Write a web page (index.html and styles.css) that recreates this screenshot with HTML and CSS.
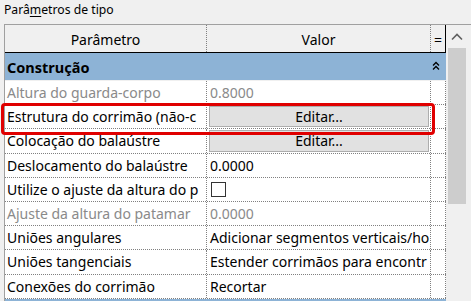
FILE: index.html
```html
<!DOCTYPE html>
<html>
<head>
<meta charset="utf-8">
<link rel="stylesheet" href="styles.css">
</head>
<body>
<div class="title">Par&acirc;<u>m</u>etros de tipo</div>
<div class="frame">
  <div class="table">
    <div class="head">
      <div class="hc c1">Parâmetro</div>
      <div class="hc c2">Valor</div>
      <div class="hc c3">=</div>
    </div>
    <div class="section">
      <span class="sec-label">Construção</span>
      <svg class="collapse" width="8" height="10" viewBox="0 0 8 10"><path d="M1 4.5 L4 1.5 L7 4.5 M1 8.5 L4 5.5 L7 8.5" fill="none" stroke="#000" stroke-width="1.3"/></svg>
    </div>
    <div class="row dim"><div class="c1 cell">Altura do guarda-corpo</div><div class="c2 cell">0.8000</div><div class="c3"></div></div>
    <div class="row"><div class="c1 cell">Estrutura do corrimão (não-c</div><div class="c2 btncell"><div class="btn">Editar...</div></div><div class="c3"></div></div>
    <div class="row"><div class="c1 cell">Colocação do balaústre</div><div class="c2 btncell"><div class="btn">Editar...</div></div><div class="c3"></div></div>
    <div class="row"><div class="c1 cell">Deslocamento do balaústre</div><div class="c2 cell">0.0000</div><div class="c3"></div></div>
    <div class="row"><div class="c1 cell">Utilize o ajuste da altura do p</div><div class="c2 cell"><span class="check"></span></div><div class="c3"></div></div>
    <div class="row dim"><div class="c1 cell">Ajuste da altura do patamar</div><div class="c2 cell">0.0000</div><div class="c3"></div></div>
    <div class="row"><div class="c1 cell">Uniões angulares</div><div class="c2 cell">Adicionar segmentos verticais/ho</div><div class="c3"></div></div>
    <div class="row"><div class="c1 cell">Uniões tangenciais</div><div class="c2 cell">Estender corrimãos para encontr</div><div class="c3"></div></div>
    <div class="row"><div class="c1 cell">Conexões do corrimão</div><div class="c2 cell">Recortar</div><div class="c3"></div></div>
    <div class="section next"></div>
    <div class="highlight"></div>
  </div>
  <div class="scroll">
    <div class="arrow"><svg width="12" height="8" viewBox="0 0 12 8"><path d="M1 6.5 L6 1.5 L11 6.5" fill="none" stroke="#606060" stroke-width="1.6"/></svg></div>
    <div class="thumb"></div>
  </div>
</div>
</body>
</html>
```
FILE: styles.css
```css
html, body {
  margin: 0;
  padding: 0;
  background: #f0f0f0;
  overflow: hidden;
  width: 471px;
  height: 301px;
}
body {
  font-family: "Noto Sans", sans-serif;
  color: #000;
}
.title {
  height: 24px;
  box-sizing: border-box;
  padding: 1px 0 0 4px;
  font-size: 12.2px;
  line-height: 17px;
}
.title u {
  text-decoration-thickness: 1px;
  text-underline-offset: 2px;
}
.frame {
  display: flex;
  margin-left: 4px;
  border-top: 1px solid #a0a0a0;
}
.table {
  position: relative;
  width: 442px;
  border-left: 1px solid #a0a0a0;
  box-sizing: border-box;
  font-size: 14px;
}
.head {
  display: flex;
  height: 28px;
  border-bottom: 1px solid #000;
  box-sizing: border-box;
}
.hc {
  display: flex;
  align-items: center;
  justify-content: center;
  box-sizing: border-box;
  border-right: 1px solid #000;
  padding-top: 1px;
}
.hc.c1 { width: 202px; }
.hc.c3 { width: 15px; border-right: 1px solid #000; }
.section {
  height: 28px;
  background: #8db3d6;
  display: flex;
  align-items: center;
  justify-content: space-between;
  padding: 0 6px 0 2px;
  box-sizing: border-box;
  border-bottom: 1px solid #f0f0f0;
}
.sec-label {
  font-weight: bold;
  font-size: 14.5px;
}
.collapse { margin-top: -2px; }
.section.next {
  height: 3px;
  border: none;
  width: 441px;
}
.row {
  display: flex;
  height: 24.2px;
  box-sizing: border-box;
  background: #fff;
  border-bottom: 1px dotted #808080;
  width: 441px;
}
.cell {
  white-space: nowrap;
  overflow: hidden;
  display: flex;
  align-items: center;
  box-sizing: border-box;
  padding-left: 2px;
}
.c1 { border-right: 1px dotted #808080; box-sizing: border-box; width: 202px; }
.c2 { border-right: 1px dotted #808080; box-sizing: border-box; width: 224px; }
.c3 { border-right: 1px dotted #808080; box-sizing: border-box; width: 15px; }
.c2.cell { padding-left: 3px; }
.dim { color: #8a8a8a; }
.btncell {
  padding: 1px 1px 1px 2px;
  display: flex;
}
.btn {
  flex: 1;
  background: #e1e1e1;
  border: 1px solid #adadad;
  display: flex;
  align-items: center;
  justify-content: center;
  box-sizing: border-box;
}
.check {
  width: 15px;
  height: 15px;
  border: 1px solid #333;
  box-sizing: border-box;
  background: #fff;
  margin-left: 1px;
}
.highlight {
  position: absolute;
  left: -4px;
  top: 78px;
  width: 434px;
  height: 32px;
  border: 3px solid #e00000;
  border-radius: 4px;
  box-sizing: border-box;
}
.scroll {
  width: 25px;
  display: flex;
  flex-direction: column;
  background: #f0f0f0;
}
.arrow {
  height: 23px;
  display: flex;
  align-items: center;
  justify-content: center;
  padding-right: 3px;
}
.thumb {
  margin-left: 2px;
  width: 18px;
  height: 156px;
  background: #cdcdcd;
}
```
